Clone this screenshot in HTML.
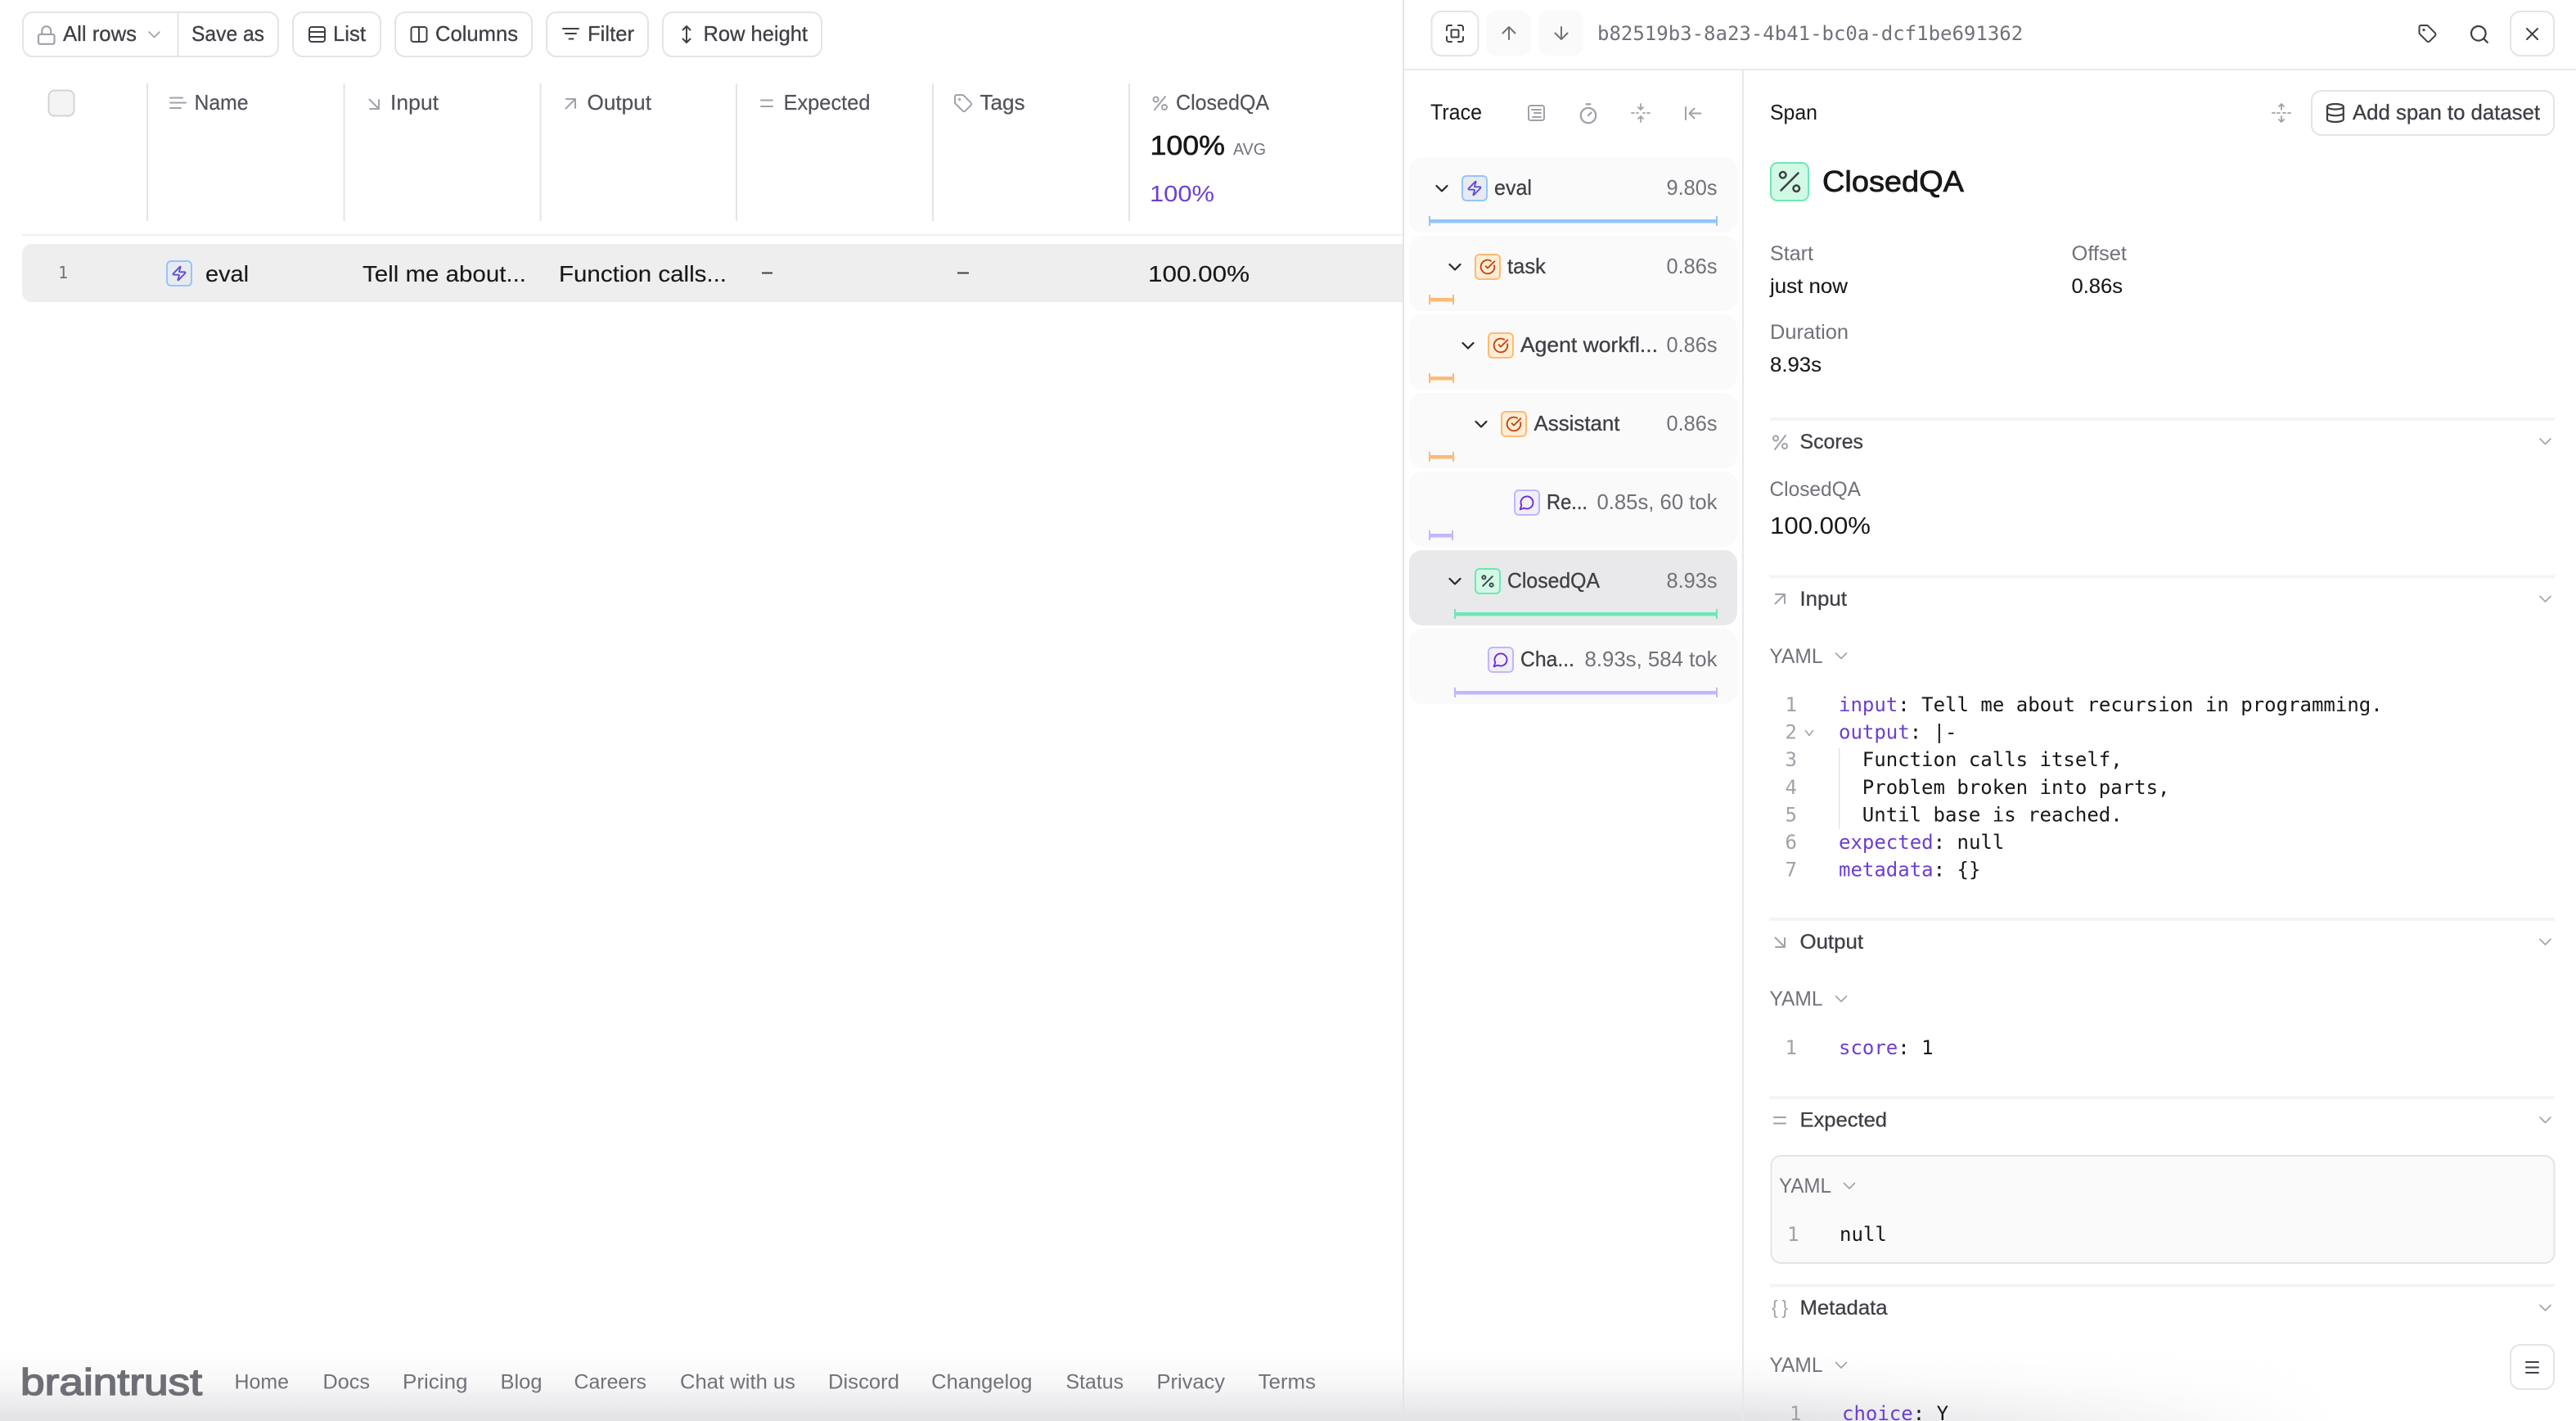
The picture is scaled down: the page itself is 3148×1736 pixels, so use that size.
<!DOCTYPE html>
<html><head><meta charset="utf-8"><title>Trace</title>
<style>
html,body{margin:0;padding:0;background:#fff;width:3148px;height:1736px;overflow:hidden}
svg{display:block}
text{font-family:"Liberation Sans",sans-serif;white-space:pre}
.m{font-family:"DejaVu Sans Mono",monospace;font-size:24px;fill:#18181b}
.n{font-family:"DejaVu Sans Mono",monospace;font-size:24px;fill:#a1a1aa}
.k{fill:#6d3fd0}
.b{font-size:26px;fill:#3f3f46;stroke:#3f3f46;stroke-width:.3px}
.h{font-size:26px;fill:#52525b;stroke:#52525b;stroke-width:.2px}
.d{font-size:28px;fill:#18181b;stroke:#18181b;stroke-width:.12px}
.tn{font-size:26px;fill:#3f3f46;stroke:#3f3f46;stroke-width:.3px}
.tt{font-size:26px;fill:#71717a}
.l{font-size:25px;fill:#71717a}
.v{font-size:25px;fill:#18181b;stroke:#18181b;stroke-width:.12px}
.f{font-size:25px;fill:#71717a}
.sec{font-size:25px;fill:#3f3f46;stroke:#3f3f46;stroke-width:.3px}
.ic{fill:none;stroke:#a1a1aa;stroke-width:2;stroke-linecap:round;stroke-linejoin:round}
.id{fill:none;stroke:#3f3f46;stroke-width:2;stroke-linecap:round;stroke-linejoin:round}
.btn{fill:#fff;stroke:#e4e4e7;stroke-width:2}
.div{fill:#f4f4f5}
.row{fill:#fafafa}
</style></head><body>
<svg width="3148" height="1736" viewBox="0 0 3148 1736" xmlns="http://www.w3.org/2000/svg">
<defs>
<linearGradient id="gv" x1="0" y1="0" x2="0" y2="1"><stop offset="0" stop-color="#e2e2e5" stop-opacity="0"/><stop offset=".45" stop-color="#e2e2e5" stop-opacity=".25"/><stop offset="1" stop-color="#e2e2e5" stop-opacity="1"/></linearGradient>
<linearGradient id="gh" gradientUnits="userSpaceOnUse" x1="2150" y1="0" x2="2850" y2="0"><stop offset="0" stop-color="#fff"/><stop offset="1" stop-color="#000"/></linearGradient>
<mask id="mk" maskUnits="userSpaceOnUse" x="0" y="1600" width="3148" height="136"><rect x="0" y="1600" width="3148" height="136" fill="url(#gh)"/></mask>
<g id="chev"><path d="M0 0l6.5 6.5L13 0" fill="none" stroke="#a1a1aa" stroke-width="1.6" stroke-linecap="round" stroke-linejoin="round"/></g>
<g id="chevd"><path d="M0 0l6.5 6.5L13 0" fill="none" stroke="#27272a" stroke-width="2.2" stroke-linecap="round" stroke-linejoin="round"/></g>
<g id="zap"><path d="M4 14a1 1 0 0 1-.78-1.63l9.9-10.2a.5.5 0 0 1 .86.46l-1.92 6.02A1 1 0 0 0 13 10h7a1 1 0 0 1 .78 1.63l-9.9 10.2a.5.5 0 0 1-.86-.46l1.92-6.02A1 1 0 0 0 11 14z" fill="none" stroke="#5b4fd6" stroke-width="2.2" stroke-linejoin="round"/></g>
<g id="task"><path d="M21.801 10A10 10 0 1 1 17 3.335M9 11l3 3L22 4" fill="none" stroke="#c2410c" stroke-width="2.2" stroke-linecap="round" stroke-linejoin="round"/></g>
<g id="chat"><path d="M7.9 20A9 9 0 1 0 4 16.1L2 22Z" fill="none" stroke="#6d28d9" stroke-width="2.2" stroke-linejoin="round"/></g>
<g id="pct"><path d="M19 5L5 19" fill="none" stroke-linecap="round"/><circle cx="6.5" cy="6.5" r="2.5" fill="none"/><circle cx="17.5" cy="17.5" r="2.5" fill="none"/></g>
<g id="bz"><rect x="1" y="1" width="30" height="30" rx="5" fill="#e8eaf0" stroke="#93c5fd" stroke-width="2"/><use href="#zap" transform="translate(6 6) scale(.833)"/></g>
<g id="bt"><rect x="1" y="1" width="30" height="30" rx="5" fill="#ffedd5" stroke="#fdba74" stroke-width="2"/><use href="#task" transform="translate(6 6) scale(.833)"/></g>
<g id="bc"><rect x="1" y="1" width="30" height="30" rx="5" fill="#efeff5" stroke="#c4b5fd" stroke-width="2"/><use href="#chat" transform="translate(6 6) scale(.833)"/></g>
<g id="bp"><rect x="1" y="1" width="30" height="30" rx="5" fill="#d1fae5" stroke="#6ee7b7" stroke-width="2"/><use href="#pct" transform="translate(6 6) scale(.833)" stroke="#3f3f46" stroke-width="2.2"/></g>
<g id="tag"><path d="M12.586 2.586A2 2 0 0 0 11.172 2H4a2 2 0 0 0-2 2v7.172a2 2 0 0 0 .586 1.414l8.704 8.704a2.426 2.426 0 0 0 3.42 0l6.58-6.58a2.426 2.426 0 0 0 0-3.42z"/><circle cx="7.5" cy="7.5" r=".6"/></g>
</defs>

<!-- footer fade -->
<rect x="0" y="1650" width="3148" height="86" fill="url(#gv)" mask="url(#mk)"/>

<!-- toolbar -->
<rect class="btn" x="28" y="15" width="312" height="54" rx="12"/>
<rect x="216.500" y="15" width="2" height="54" fill="#e4e4e7"/>
<g class="ic" transform="translate(43.75 30) scale(1.083)" stroke-width="1.85"><rect x="3" y="11" width="18" height="11" rx="2"/><path d="M7 11V7a5 5 0 0 1 10 0v4"/></g>
<text class="b" x="77" y="50" textLength="90" lengthAdjust="spacingAndGlyphs">All rows</text>
<use href="#chev" x="182" y="39"/>
<text class="b" x="234" y="50" textLength="89" lengthAdjust="spacingAndGlyphs">Save as</text>
<rect class="btn" x="358" y="15" width="107" height="54" rx="12"/>
<g class="id"><rect x="378" y="33" width="19" height="18" rx="3"/><path d="M378 39h19M378 45h19"/></g>
<text class="b" x="407" y="50" textLength="40" lengthAdjust="spacingAndGlyphs">List</text>
<rect class="btn" x="483" y="15" width="167" height="54" rx="12"/>
<g class="id"><rect x="502.500" y="33" width="19" height="18" rx="3"/><path d="M512 33v18"/></g>
<text class="b" x="532" y="50" textLength="101" lengthAdjust="spacingAndGlyphs">Columns</text>
<rect class="btn" x="668" y="15" width="124" height="54" rx="12"/>
<g class="id"><path d="M688 35h19M691 41h13M695.500 47.500h5"/></g>
<text class="b" x="718" y="50" textLength="57" lengthAdjust="spacingAndGlyphs">Filter</text>
<rect class="btn" x="810" y="15" width="194" height="54" rx="12"/>
<g class="id"><path d="M839 32v20M834.500 36.500L839 32l4.500 4.500M834.500 47.500L839 52l4.500-4.500"/></g>
<text class="b" x="859.500" y="50" textLength="127.500" lengthAdjust="spacingAndGlyphs">Row height</text>

<!-- table header -->
<rect x="59.500" y="110.500" width="31" height="31" rx="7" fill="#f4f4f5" stroke="#d4d4d8" stroke-width="2"/>
<g fill="#e4e4e7"><rect x="179" y="102" width="2" height="168"/><rect x="419.500" y="102" width="2" height="168"/><rect x="659.500" y="102" width="2" height="168"/><rect x="899" y="102" width="2" height="168"/><rect x="1139" y="102" width="2" height="168"/><rect x="1379" y="102" width="2" height="168"/></g>
<rect x="27" y="286" width="1687" height="2" fill="#f0f0f2"/>
<g class="ic"><path d="M208 119.500h15M208 125.500h19M208 132h13"/></g>
<text class="h" x="237.500" y="134" textLength="66" lengthAdjust="spacingAndGlyphs">Name</text>
<g class="ic"><path d="M451.500 121.500l11 11M463 122v11h-11"/></g>
<text class="h" x="477" y="134" textLength="59" lengthAdjust="spacingAndGlyphs">Input</text>
<g class="ic"><path d="M691.500 132.500l11-11M692 121h11v11"/></g>
<text class="h" x="717.500" y="134" textLength="78.500" lengthAdjust="spacingAndGlyphs">Output</text>
<g class="ic"><path d="M930 122.500h14M930 130h14"/></g>
<text class="h" x="957.500" y="134" textLength="106" lengthAdjust="spacingAndGlyphs">Expected</text>
<use href="#tag" class="ic" transform="translate(1165 114)"/>
<text class="h" x="1197.500" y="134" textLength="55" lengthAdjust="spacingAndGlyphs">Tags</text>
<g class="ic"><path d="M1424 118l-13 16"/><circle cx="1412.500" cy="121.500" r="3"/><circle cx="1423" cy="131" r="3"/></g>
<text class="h" x="1437" y="134" textLength="114" lengthAdjust="spacingAndGlyphs">ClosedQA</text>
<text x="1405.500" y="189" font-size="33" fill="#18181b" stroke="#18181b" stroke-width=".6" textLength="91.500" lengthAdjust="spacingAndGlyphs">100%</text>
<text x="1507" y="189" font-size="20" fill="#71717a" textLength="40" lengthAdjust="spacingAndGlyphs">AVG</text>
<text x="1405" y="246" font-size="28" fill="#6d3fd0" textLength="79" lengthAdjust="spacingAndGlyphs">100%</text>

<!-- table row -->
<path d="M39 298H1714V369H39a12 12 0 0 1-12-12V310a12 12 0 0 1 12-12z" fill="#eeeeef"/>
<text x="71" y="340" font-family="DejaVu Sans Mono" style="font-family:'DejaVu Sans Mono',monospace;font-size:20px;fill:#71717a">1</text>
<use href="#bz" x="203" y="318"/>
<text class="d" x="251" y="344" textLength="53" lengthAdjust="spacingAndGlyphs">eval</text>
<text class="d" x="443" y="344" textLength="200" lengthAdjust="spacingAndGlyphs">Tell me about...</text>
<text class="d" x="683" y="344" textLength="205" lengthAdjust="spacingAndGlyphs">Function calls...</text>
<rect x="931" y="332.500" width="13" height="2" fill="#3f3f46"/>
<rect x="1170" y="332.500" width="14" height="2" fill="#3f3f46"/>
<text class="d" x="1403" y="344" textLength="124" lengthAdjust="spacingAndGlyphs">100.00%</text>

<!-- panel borders -->
<rect x="1714" y="0" width="2" height="1736" fill="#e4e4e7"/>
<rect x="1716" y="84" width="1432" height="2" fill="#e8e8ec"/>
<rect x="2129" y="86" width="2" height="1650" fill="#e8e8ec"/>

<!-- top bar -->
<rect class="btn" x="1749.500" y="14" width="57" height="54" rx="12"/>
<g class="id"><path d="M1768 37v-3.500a2.500 2.500 0 0 1 2.500-2.500h3.500M1782 31h3.500a2.500 2.500 0 0 1 2.500 2.500v3.500M1788 45v3.500a2.500 2.500 0 0 1-2.500 2.500h-3.500M1774 51h-3.500a2.500 2.500 0 0 1-2.500-2.500v-3.500"/><rect x="1773.500" y="36.500" width="9" height="9" rx="1"/></g>
<rect x="1816" y="13" width="55" height="55" rx="12" fill="#fafafa"/>
<rect x="1880" y="13" width="55" height="55" rx="12" fill="#fafafa"/>
<g fill="none" stroke="#71717a" stroke-width="2" stroke-linecap="round" stroke-linejoin="round"><path d="M1844 48V33M1836.500 40.500L1844 33l7.500 7.500"/><path d="M1908 33v15M1900.500 40.500L1908 48l7.500-7.500"/></g>
<text class="m" x="1952" y="49" style="fill:#71717a">b82519b3-8a23-4b41-bc0a-dcf1be691362</text>
<use href="#tag" class="id" transform="translate(2954.500 29)"/>
<g class="id" transform="translate(3016.700 28.700) scale(1.1)" stroke-width="1.9"><circle cx="11" cy="11" r="8"/><path d="M21 21l-4.300-4.300"/></g>
<rect class="btn" x="3068" y="14" width="53" height="54" rx="12"/>
<g class="id"><path d="M3088 35l13 13M3101 35l-13 13"/></g>

<!-- trace header -->
<text x="1748" y="146" font-size="27" fill="#18181b" textLength="63" lengthAdjust="spacingAndGlyphs">Trace</text>
<g class="ic"><rect x="1868" y="129" width="19" height="18" rx="2.500"/><path d="M1872 134h11M1875 138h8M1873 143h10"/></g>
<g class="ic" transform="translate(1927.200 125) scale(1.15)" stroke-width="1.8"><path d="M10 2h4M12 14l3-3"/><circle cx="12" cy="14" r="8"/></g>
<g class="ic"><path d="M1994 138h3M2000 138h2M2008 138h2M2013 138h3M2005 127v7M2002 131l3 3 3-3M2005 149v-7M2002 145l3-3 3 3" stroke-width="1.800"/></g>
<g class="ic"><path d="M2060 131v15M2078.500 138.500h-14M2070.500 132.500l-6 6 6 6"/></g>

<!-- trace rows -->
<g>
<rect class="row" x="1722" y="192" width="401" height="92" rx="16"/>
<rect class="row" x="1722" y="288" width="401" height="92" rx="16"/>
<rect class="row" x="1722" y="384" width="401" height="92" rx="16"/>
<rect class="row" x="1722" y="480" width="401" height="92" rx="16"/>
<rect class="row" x="1722" y="576" width="401" height="92" rx="16"/>
<rect x="1722" y="672" width="401" height="92" rx="16" fill="#e9e9eb"/>
<rect class="row" x="1722" y="768" width="401" height="92" rx="16"/>
</g>
<use href="#chevd" x="1755.500" y="227"/><use href="#bz" x="1786" y="214"/>
<text class="tn" x="1826" y="238" textLength="46" lengthAdjust="spacingAndGlyphs">eval</text>
<text class="tt" x="2036.500" y="238" textLength="62" lengthAdjust="spacingAndGlyphs">9.80s</text>
<g fill="#93c5fd"><rect x="1746" y="268" width="353" height="4.500"/><rect x="1746" y="264" width="2" height="12"/><rect x="2097" y="264" width="2" height="12"/></g>

<use href="#chevd" x="1771.500" y="323"/><use href="#bt" x="1802" y="310"/>
<text class="tn" x="1842" y="334" textLength="47" lengthAdjust="spacingAndGlyphs">task</text>
<text class="tt" x="2036.500" y="334" textLength="62" lengthAdjust="spacingAndGlyphs">0.86s</text>
<g fill="#fdba74"><rect x="1746" y="364" width="31" height="4.500"/><rect x="1746" y="360" width="2" height="12"/><rect x="1775" y="360" width="2" height="12"/></g>

<use href="#chevd" x="1787.500" y="419"/><use href="#bt" x="1818" y="406"/>
<text class="tn" x="1858" y="430" textLength="168" lengthAdjust="spacingAndGlyphs">Agent workfl...</text>
<text class="tt" x="2036.500" y="430" textLength="62" lengthAdjust="spacingAndGlyphs">0.86s</text>
<g fill="#fdba74"><rect x="1746" y="460" width="31" height="4.500"/><rect x="1746" y="456" width="2" height="12"/><rect x="1775" y="456" width="2" height="12"/></g>

<use href="#chevd" x="1803.500" y="515"/><use href="#bt" x="1834" y="502"/>
<text class="tn" x="1874.500" y="526" textLength="105" lengthAdjust="spacingAndGlyphs">Assistant</text>
<text class="tt" x="2036.500" y="526" textLength="62" lengthAdjust="spacingAndGlyphs">0.86s</text>
<g fill="#fdba74"><rect x="1746" y="556" width="31" height="4.500"/><rect x="1746" y="552" width="2" height="12"/><rect x="1775" y="552" width="2" height="12"/></g>

<use href="#bc" x="1850" y="598"/>
<text class="tn" x="1890" y="622" textLength="50" lengthAdjust="spacingAndGlyphs">Re...</text>
<text class="tt" x="1951.500" y="622" textLength="147" lengthAdjust="spacingAndGlyphs">0.85s, 60 tok</text>
<g fill="#c4b5fd"><rect x="1746" y="652" width="30" height="4.500"/><rect x="1746" y="648" width="2" height="12"/><rect x="1774" y="648" width="2" height="12"/></g>

<use href="#chevd" x="1771.500" y="707"/><use href="#bp" x="1802" y="694"/>
<text class="tn" x="1842" y="718" textLength="113" lengthAdjust="spacingAndGlyphs">ClosedQA</text>
<text class="tt" x="2036.500" y="718" textLength="62" lengthAdjust="spacingAndGlyphs">8.93s</text>
<g fill="#6ee7b7"><rect x="1777" y="748" width="322" height="4.500"/><rect x="1777" y="744" width="2" height="12"/><rect x="2097" y="744" width="2" height="12"/></g>

<use href="#bc" x="1818" y="790"/>
<text class="tn" x="1858" y="814" textLength="66" lengthAdjust="spacingAndGlyphs">Cha...</text>
<text class="tt" x="1936.500" y="814" textLength="162" lengthAdjust="spacingAndGlyphs">8.93s, 584 tok</text>
<g fill="#c4b5fd"><rect x="1777" y="844" width="322" height="4.500"/><rect x="1777" y="840" width="2" height="12"/><rect x="2097" y="840" width="2" height="12"/></g>

<!-- span header -->
<text x="2163" y="146" font-size="26" fill="#18181b" textLength="58" lengthAdjust="spacingAndGlyphs">Span</text>
<g class="ic"><path d="M2777 138h3M2783 138h3M2790 138h3M2796 138h3M2788 134v-7M2785 130l3-3 3 3M2788 142v7M2785 146l3 3 3-3" stroke-width="1.800"/></g>
<rect class="btn" x="2825" y="111" width="296" height="54" rx="12"/>
<g class="id" transform="translate(2840.700 124.800) scale(1.1)" stroke-width="1.9"><ellipse cx="12" cy="5" rx="9" ry="3"/><path d="M3 5V19A9 3 0 0 0 21 19V5M3 12A9 3 0 0 0 21 12"/></g>
<text class="b" x="2875" y="146" textLength="229" lengthAdjust="spacingAndGlyphs">Add span to dataset</text>

<rect x="2164" y="199" width="46" height="46" rx="8" fill="#d1fae5" stroke="#6ee7b7" stroke-width="2"/>
<use href="#pct" transform="translate(2169 204) scale(1.5)" stroke="#3f3f46" stroke-width="1.7"/>
<text x="2227" y="234" font-size="36" fill="#18181b" stroke="#18181b" stroke-width=".8" textLength="173" lengthAdjust="spacingAndGlyphs">ClosedQA</text>

<text class="l" x="2163" y="318" textLength="53" lengthAdjust="spacingAndGlyphs">Start</text>
<text class="v" x="2163" y="358" textLength="95" lengthAdjust="spacingAndGlyphs">just now</text>
<text class="l" x="2531.500" y="318" textLength="67.500" lengthAdjust="spacingAndGlyphs">Offset</text>
<text class="v" x="2531.500" y="358" textLength="62.500" lengthAdjust="spacingAndGlyphs">0.86s</text>
<text class="l" x="2163" y="414" textLength="96" lengthAdjust="spacingAndGlyphs">Duration</text>
<text class="v" x="2163" y="454" textLength="63" lengthAdjust="spacingAndGlyphs">8.93s</text>

<!-- Scores -->
<rect class="div" x="2162.500" y="510" width="959.500" height="4"/>
<g class="ic"><path d="M2182 532l-13 17"/><circle cx="2170" cy="535.500" r="3"/><circle cx="2181" cy="545" r="3"/></g>
<text class="sec" x="2199.500" y="548" textLength="77.500" lengthAdjust="spacingAndGlyphs">Scores</text>
<use href="#chev" x="3104" y="536"/>
<text class="l" x="2162.500" y="606" textLength="111.500" lengthAdjust="spacingAndGlyphs">ClosedQA</text>
<text x="2163" y="652" font-size="29" fill="#18181b" textLength="123" lengthAdjust="spacingAndGlyphs">100.00%</text>

<!-- Input -->
<rect class="div" x="2162.500" y="702.500" width="959.500" height="4"/>
<g class="ic"><path d="M2169.500 737.500l11-11M2170 726h11v11"/></g>
<text class="sec" x="2199.500" y="740" textLength="57.500" lengthAdjust="spacingAndGlyphs">Input</text>
<use href="#chev" x="3104" y="728.500"/>
<text class="l" x="2162.500" y="810" textLength="65" lengthAdjust="spacingAndGlyphs">YAML</text>
<use href="#chev" x="2243.500" y="798"/>
<g>
<text class="n" x="2181.500" y="869">1</text>
<text class="n" x="2181.500" y="902.600">2</text>
<text class="n" x="2181.500" y="936.200">3</text>
<text class="n" x="2181.500" y="969.800">4</text>
<text class="n" x="2181.500" y="1003.400">5</text>
<text class="n" x="2181.500" y="1037">6</text>
<text class="n" x="2181.500" y="1070.600">7</text>
</g>
<path d="M2206.500 892.500l4.500 6 4.500-6" fill="none" stroke="#a1a1aa" stroke-width="1.500" stroke-linecap="round" stroke-linejoin="round"/>
<rect x="2247" y="914" width="1.500" height="99" fill="#e4e4e7"/>
<text class="m" x="2247" y="869"><tspan class="k">input</tspan>: Tell me about recursion in programming.</text>
<text class="m" x="2247" y="902.600"><tspan class="k">output</tspan>: |-</text>
<text class="m" x="2275.800" y="936.200">Function calls itself,</text>
<text class="m" x="2275.800" y="969.800">Problem broken into parts,</text>
<text class="m" x="2275.800" y="1003.400">Until base is reached.</text>
<text class="m" x="2247" y="1037"><tspan class="k">expected</tspan>: null</text>
<text class="m" x="2247" y="1070.600"><tspan class="k">metadata</tspan>: {}</text>

<!-- Output -->
<rect class="div" x="2162.500" y="1121" width="959.500" height="4"/>
<g class="ic"><path d="M2169.500 1145.500l11 11M2181 1146v11h-11"/></g>
<text class="sec" x="2199.500" y="1159" textLength="77.500" lengthAdjust="spacingAndGlyphs">Output</text>
<use href="#chev" x="3104" y="1147.500"/>
<text class="l" x="2162.500" y="1228.600" textLength="65" lengthAdjust="spacingAndGlyphs">YAML</text>
<use href="#chev" x="2243.500" y="1217"/>
<text class="n" x="2181.500" y="1288">1</text>
<text class="m" x="2247" y="1288"><tspan class="k">score</tspan>: 1</text>

<!-- Expected -->
<rect class="div" x="2162.500" y="1339" width="959.500" height="4"/>
<g class="ic"><path d="M2168 1365h14M2168 1372.500h14"/></g>
<text class="sec" x="2199.500" y="1376.700" textLength="106.500" lengthAdjust="spacingAndGlyphs">Expected</text>
<use href="#chev" x="3104" y="1365"/>
<rect x="2164.500" y="1412" width="957" height="131" rx="12" fill="#fafafa" stroke="#e4e4e7" stroke-width="2"/>
<text class="l" x="2174" y="1457" textLength="64" lengthAdjust="spacingAndGlyphs">YAML</text>
<use href="#chev" x="2253.500" y="1445.500"/>
<text class="n" x="2184" y="1516">1</text>
<text class="m" x="2248" y="1516">null</text>

<!-- Metadata -->
<rect class="div" x="2162.500" y="1568.500" width="959.500" height="4"/>
<text x="2165" y="1605" font-size="23" fill="#a1a1aa" textLength="20" lengthAdjust="spacing">{ }</text>
<text class="sec" x="2199.500" y="1606" textLength="107" lengthAdjust="spacingAndGlyphs">Metadata</text>
<use href="#chev" x="3104" y="1594.500"/>
<text class="l" x="2162.500" y="1676" textLength="65" lengthAdjust="spacingAndGlyphs">YAML</text>
<use href="#chev" x="2243.500" y="1664.500"/>
<rect class="btn" x="3068" y="1643" width="53" height="54" rx="12"/>
<g class="id"><path d="M3087 1664h15M3087 1670.500h15M3087 1677h15"/></g>
<text class="n" x="2187" y="1735">1</text>
<text class="m" x="2251" y="1735"><tspan class="k">choice</tspan>: Y</text>

<!-- footer -->
<text x="25" y="1704" font-size="45" fill="#6e6e76" stroke="#6e6e76" stroke-width="1.5" textLength="222" lengthAdjust="spacingAndGlyphs">braintrust</text>
<text class="f" x="286.500" y="1696.500" textLength="66.500" lengthAdjust="spacingAndGlyphs">Home</text>
<text class="f" x="394.500" y="1696.500" textLength="57.500" lengthAdjust="spacingAndGlyphs">Docs</text>
<text class="f" x="492" y="1696.500" textLength="79.500" lengthAdjust="spacingAndGlyphs">Pricing</text>
<text class="f" x="611.500" y="1696.500" textLength="51" lengthAdjust="spacingAndGlyphs">Blog</text>
<text class="f" x="701.500" y="1696.500" textLength="88.500" lengthAdjust="spacingAndGlyphs">Careers</text>
<text class="f" x="831" y="1696.500" textLength="141" lengthAdjust="spacingAndGlyphs">Chat with us</text>
<text class="f" x="1012" y="1696.500" textLength="87" lengthAdjust="spacingAndGlyphs">Discord</text>
<text class="f" x="1138.200" y="1696.500" textLength="123.300" lengthAdjust="spacingAndGlyphs">Changelog</text>
<text class="f" x="1302.500" y="1696.500" textLength="70.500" lengthAdjust="spacingAndGlyphs">Status</text>
<text class="f" x="1413.500" y="1696.500" textLength="83.500" lengthAdjust="spacingAndGlyphs">Privacy</text>
<text class="f" x="1537.500" y="1696.500" textLength="70.500" lengthAdjust="spacingAndGlyphs">Terms</text>
</svg>
</body></html>
